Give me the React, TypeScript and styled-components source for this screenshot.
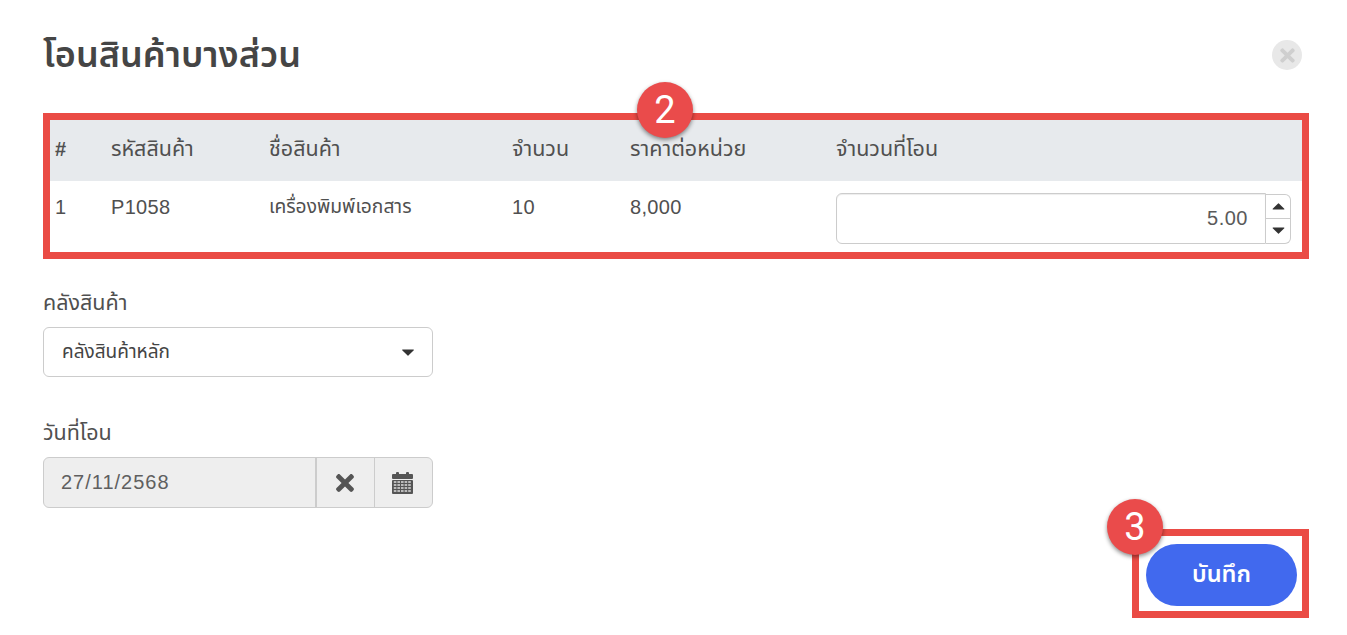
import styled, { createGlobalStyle } from 'styled-components'
import { FaTimes } from 'react-icons/fa'

const GlobalStyle = createGlobalStyle`
  html, body {
    margin: 0;
    padding: 0;
    background: #fff;
  }
  body {
    font-family: 'Liberation Sans', 'Noto Sans Thai', sans-serif;
    color: #4f4f4f;
  }
`

const columns = ['รหัสสินค้า', 'ชื่อสินค้า', 'จำนวน', 'ราคาต่อหน่วย', 'จำนวนที่โอน']

const CaretDown = () => (
  <Caret viewBox="0 0 12 7">
    <path d="M0.6 0.4h10.8a.5 .5 0 0 1 .4 .8l-5.4 5.4a.5 .5 0 0 1 -.8 0L.2 1.2a.5 .5 0 0 1 .4 -.8z" />
  </Caret>
)

const CaretUp = () => (
  <Caret viewBox="0 0 12 7">
    <path d="M0.6 6.6h10.8a.5 .5 0 0 0 .4 -.8L6.4 .4a.5 .5 0 0 0 -.8 0L.2 5.8a.5 .5 0 0 0 .4 .8z" />
  </Caret>
)

// font-awesome 4 style calendar, the cells are little holes in the body
const CalendarIcon = () => {
  const cells = []
  for (let r = 0; r < 4; r++) {
    for (let c = 0; c < 5; c++) {
      cells.push(<rect key={`${r}-${c}`} x={1.8 + c * 3.6} y={9 + r * 3} width={2.6} height={2} fill="#bbb" />)
    }
  }
  return (
    <svg width="21" height="22" viewBox="0 0 21 22" fill="#555">
      <rect x="4" y="0" width="3" height="4" rx="1" />
      <rect x="14" y="0" width="3" height="4" rx="1" />
      <rect x="0" y="2" width="21" height="5" rx="1" />
      <rect x="0" y="8" width="21" height="14" rx="1" />
      {cells}
    </svg>
  )
}

const App = () => {
  return (
    <Page>
      <GlobalStyle />
      <Header>
        <Title>โอนสินค้าบางส่วน</Title>
        <CloseButton>
          <FaTimes />
        </CloseButton>
      </Header>

      <TableFrame>
        <Badge>2</Badge>
        <HeadRow>
          <Hash>#</Hash>
          {columns.map((c) => (
            <span key={c}>{c}</span>
          ))}
        </HeadRow>
        <BodyRow>
          <Latin>1</Latin>
          <Latin>P1058</Latin>
          <span>เครื่องพิมพ์เอกสาร</span>
          <Latin>10</Latin>
          <Latin>8,000</Latin>
          <AmountField>
            <AmountInput>5.00</AmountInput>
            <Spinner>
              <SpinButton>
                <CaretUp />
              </SpinButton>
              <SpinButton>
                <CaretDown />
              </SpinButton>
            </Spinner>
          </AmountField>
        </BodyRow>
      </TableFrame>

      <Field>
        <Label>คลังสินค้า</Label>
        <Select>
          คลังสินค้าหลัก
          <CaretDown />
        </Select>
      </Field>

      <DateField>
        <Label>วันที่โอน</Label>
        <DateGroup>
          <DateValue>27/11/2568</DateValue>
          <DateButton $width={57}>
            <FaTimes />
          </DateButton>
          <DateButton $width={58}>
            <CalendarIcon />
          </DateButton>
        </DateGroup>
      </DateField>

      <Footer>
        <SaveFrame>
          <Badge $corner>3</Badge>
          <SaveButton>บันทึก</SaveButton>
        </SaveFrame>
      </Footer>
    </Page>
  )
}

const Page = styled.div`
  width: 1347px;
  height: 635px;
  box-sizing: border-box;
  padding: 0 38px 0 43px;
  overflow: hidden;
`

const Header = styled.div`
  display: flex;
  align-items: center;
  justify-content: space-between;
  height: 113px;
  padding: 0 7px 3px 0;
  box-sizing: border-box;
`

const Title = styled.h1`
  margin: 2px 0 0;
  font-size: 36px;
  font-weight: 600;
  color: #454545;
`

const CloseButton = styled.div`
  width: 30px;
  height: 30px;
  border-radius: 50%;
  background: #e8e8e8;
  color: #cfcfcf;
  display: flex;
  align-items: center;
  justify-content: center;
  font-size: 21px;
`

const TableFrame = styled.div`
  position: relative;
  border: 7px solid #ea4b45;
  height: 146px;
  box-sizing: border-box;
`

const Badge = styled.div<{ $corner?: boolean }>`
  position: absolute;
  top: ${(p) => (p.$corner ? '-37px' : '-38px')};
  left: ${(p) => (p.$corner ? '-32px' : '587px')};
  width: 56px;
  height: 56px;
  border-radius: 50%;
  background: #ea4b4b;
  color: #fff;
  font-size: 38px;
  font-family: 'Roboto', sans-serif;
  font-weight: 400;
  display: flex;
  align-items: center;
  justify-content: center;
  box-shadow: 0 2px 4px rgba(0, 0, 0, 0.45);
`

const HeadRow = styled.div`
  display: grid;
  grid-template-columns: 56px 158px 243px 118px 206px 1fr;
  align-items: center;
  height: 61px;
  padding: 0 0 3px 5px;
  box-sizing: border-box;
  background: #e7eaed;
  font-size: 21.5px;
  color: #505050;
`

const Hash = styled.span`
  font-size: 20px;
  font-weight: 700;
`

const BodyRow = styled.div`
  display: grid;
  grid-template-columns: 56px 158px 243px 118px 206px 1fr;
  align-items: start;
  height: 71px;
  padding-left: 5px;
  font-size: 19.2px;
  line-height: 52px;
  color: #505050;
`

const Latin = styled.span`
  font-size: 20px;
  letter-spacing: 0.3px;
`

const AmountField = styled.div`
  display: flex;
  align-items: center;
  margin-top: 12px;
  width: 455px;
`

const AmountInput = styled.div`
  flex: 1;
  height: 51px;
  box-sizing: border-box;
  border: 1px solid #ccc;
  border-radius: 6px 0 0 6px;
  padding-right: 17px;
  text-align: right;
  line-height: 49px;
  font-size: 20px;
  letter-spacing: 0.5px;
  color: #5a5a5a;
  box-shadow: inset 0 1px 1px rgba(0, 0, 0, 0.075);
`

const Spinner = styled.div`
  width: 25px;
  height: 50px;
  box-sizing: border-box;
  border: 1px solid #ccc;
  border-left: 0;
  border-radius: 0 6px 6px 0;
  display: flex;
  flex-direction: column;
`

const SpinButton = styled.div`
  flex: 1;
  display: flex;
  align-items: center;
  justify-content: center;
  color: #333;

  & + & {
    border-top: 1px solid #ccc;
  }

  svg {
    width: 13px;
    height: 7px;
  }
`

const Field = styled.div`
  width: 390px;
  margin-top: 31px;
`

const DateField = styled(Field)`
  margin-top: 43px;
`

const Label = styled.div`
  font-size: 21.5px;
  line-height: 26px;
  margin-bottom: 11px;
  color: #505050;
`

const Caret = styled.svg`
  width: 12px;
  height: 7px;
  fill: currentColor;
`

const Select = styled.div`
  height: 50px;
  box-sizing: border-box;
  border: 1px solid #ccc;
  border-radius: 6px;
  padding: 0 18px;
  display: flex;
  align-items: center;
  justify-content: space-between;
  font-size: 19px;
  color: #444;

  svg {
    color: #333;
  }
`

const DateGroup = styled.div`
  display: flex;
  height: 51px;
  box-sizing: border-box;
  border: 1px solid #ccc;
  border-radius: 6px;
  background: #eee;
`

const DateValue = styled.div`
  flex: 1;
  padding-left: 17px;
  line-height: 49px;
  font-size: 20px;
  letter-spacing: 1px;
  color: #5f5f5f;
  border-right: 2px solid #ccc;
`

const DateButton = styled.div<{ $width: number }>`
  width: ${(p) => p.$width}px;
  box-sizing: border-box;
  padding-right: 2px;
  display: flex;
  align-items: center;
  justify-content: center;
  color: #555;
  font-size: 26px;

  & + & {
    border-left: 1px solid #ccc;
  }
`

const Footer = styled.div`
  display: flex;
  justify-content: flex-end;
  margin-top: 21px;
`

const SaveFrame = styled.div`
  position: relative;
  width: 177px;
  height: 89px;
  box-sizing: border-box;
  border: 7px solid #ea4b45;
  display: flex;
  align-items: center;
  justify-content: center;
`

const SaveButton = styled.div`
  width: 151px;
  height: 62px;
  margin: 2px 0 0 2px;
  border-radius: 31px;
  background: #4169ee;
  color: #fff;
  font-size: 23.5px;
  font-weight: 600;
  display: flex;
  align-items: center;
  justify-content: center;
`

export default App
